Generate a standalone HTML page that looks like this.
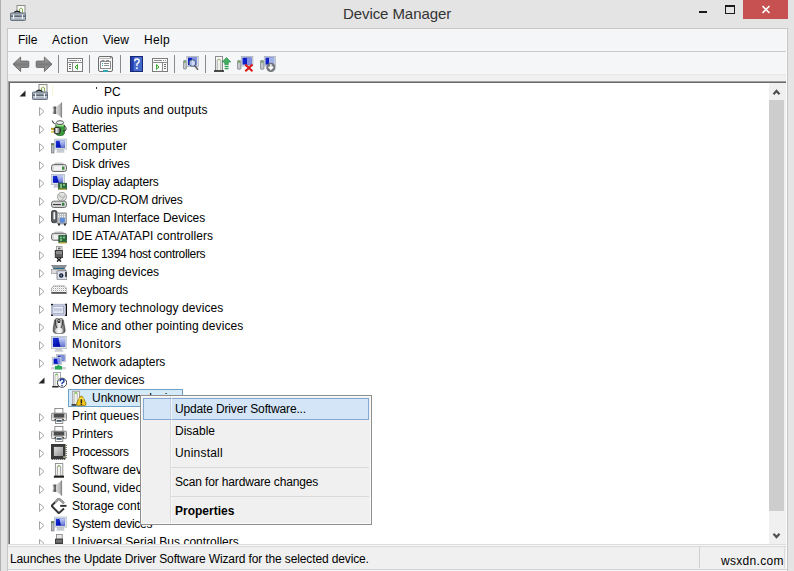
<!DOCTYPE html><html><head><meta charset="utf-8"><style>
html,body{margin:0;padding:0}
body{width:794px;height:571px;position:relative;overflow:hidden;background:#e4e4e4;font-family:"Liberation Sans",sans-serif;font-size:12px;color:#000}
.a{position:absolute}
.t{position:absolute;white-space:nowrap;line-height:14px;height:14px}
.arr{position:absolute;width:0;height:0}
</style></head><body>
<div class="a" style="left:0;top:0;width:1px;height:571px;background:#b0b0b0"></div>
<svg class="a" style="left:10px;top:5px" width="16" height="16" viewBox="0 0 16 16">
<rect x="7" y="0.5" width="8" height="8" fill="#fafaf6" stroke="#8c8c88" stroke-width="1"/>
<path d="M9.5 8 L9.5 4 Q11 2 12.5 4 L12.5 8" fill="#eef4e4" stroke="#90b060" stroke-width="1"/>
<path d="M4 8 Q7 4.5 10.5 8" fill="none" stroke="#202428" stroke-width="1.6"/>
<rect x="0.5" y="8" width="15" height="7.5" rx="0.8" fill="#a4aeba" stroke="#6a7480" stroke-width="1"/>
<rect x="1" y="10.5" width="14" height="1.5" fill="#5e6874"/>
<rect x="1" y="12.2" width="14" height="1" fill="#c8d0da"/>
<rect x="3" y="9.5" width="1.2" height="4.5" fill="#f0f4f8"/>
<rect x="11.8" y="9.5" width="1.2" height="4.5" fill="#f0f4f8"/>
</svg>
<div class="t" style="left:343px;top:5px;font-size:15px;line-height:17px;height:17px;color:#333;letter-spacing:-0.08px">Device Manager</div>
<div class="a" style="left:699px;top:11px;width:8px;height:2px;background:#1a1a1a"></div>
<div class="a" style="left:725px;top:5px;width:8px;height:6px;border:1px solid #1a1a1a;border-top-width:2px"></div>
<div class="a" style="left:743px;top:0;width:45px;height:19px;background:#c75050"></div>
<svg class="a" style="left:761px;top:5px" width="10" height="9" viewBox="0 0 10 9"><path d="M1.5 1 L8.5 8 M8.5 1 L1.5 8" stroke="#fff" stroke-width="1.6"/></svg>
<div class="a" style="left:7px;top:28px;width:781px;height:543px;background:#f5f6f7;border:1px solid #c6c6c6;border-bottom:none;box-sizing:border-box"></div>
<div class="a" style="left:786px;top:29px;width:1px;height:541px;background:#fbfbfb"></div>
<div class="t" style="left:18px;top:33px;letter-spacing:0px">File</div>
<div class="t" style="left:52px;top:33px;letter-spacing:0.5px">Action</div>
<div class="t" style="left:103px;top:33px;letter-spacing:0px">View</div>
<div class="t" style="left:144px;top:33px;letter-spacing:0.3px">Help</div>
<div class="a" style="left:8px;top:51px;width:778px;height:1px;background:#cacaca"></div>
<div class="a" style="left:8px;top:74px;width:778px;height:7px;background:#f0f0f0"></div>
<div class="a" style="left:8px;top:74px;width:778px;height:1px;background:#e8e8e8"></div>
<div class="a" style="left:58px;top:55px;width:1px;height:18px;background:#8a8a8a"></div>
<div class="a" style="left:89px;top:55px;width:1px;height:18px;background:#8a8a8a"></div>
<div class="a" style="left:120px;top:55px;width:1px;height:18px;background:#8a8a8a"></div>
<div class="a" style="left:174px;top:55px;width:1px;height:18px;background:#8a8a8a"></div>
<div class="a" style="left:205px;top:55px;width:1px;height:18px;background:#8a8a8a"></div>

<svg class="a" style="left:12px;top:56px" width="18" height="17" viewBox="0 0 18 17"><defs><linearGradient id="gar" x1="0" y1="0" x2="0" y2="1"><stop offset="0" stop-color="#b4b4b4"/><stop offset="0.5" stop-color="#7a7a7a"/><stop offset="1" stop-color="#a8a8a8"/></linearGradient></defs><path d="M1 8.2 L8.6 1 L8.6 5.1 L16 5.1 Q16.8 5.1 16.8 5.9 L16.8 10.6 Q16.8 11.4 16 11.4 L8.6 11.4 L8.6 15.5 Z" fill="url(#gar)" stroke="#666" stroke-width="0.9" stroke-linejoin="round"/></svg>
<svg class="a" style="left:35px;top:56px" width="18" height="17" viewBox="0 0 18 17"><path transform="translate(18,0) scale(-1,1)" d="M1 8.2 L8.6 1 L8.6 5.1 L16 5.1 Q16.8 5.1 16.8 5.9 L16.8 10.6 Q16.8 11.4 16 11.4 L8.6 11.4 L8.6 15.5 Z" fill="url(#gar)" stroke="#666" stroke-width="0.9" stroke-linejoin="round"/></svg>
<svg class="a" style="left:67px;top:58px" width="17" height="15" viewBox="0 0 17 15"><rect x="0.5" y="0.5" width="15" height="13" fill="#fbfbfb" stroke="#7c7c7c"/><path d="M2 2.5 h8" stroke="#8c8c8c"/><rect x="11" y="2" width="1" height="1" fill="#8c8c8c"/><rect x="13" y="2" width="1" height="1" fill="#8c8c8c"/><path d="M0.5 4.5 h15" stroke="#8c8c8c"/><path d="M5.5 4.5 v9" stroke="#8c8c8c"/><path d="M2 6.5 h2 M2 8.5 h2 M2 10.5 h2" stroke="#6c6c6c"/><path d="M10.5 6.5 L8 9 L10.5 11.5 Z" fill="#d8f0c8" stroke="#40a838" stroke-width="1"/></svg>
<svg class="a" style="left:98px;top:56px" width="16" height="17" viewBox="0 0 16 17"><rect x="0.5" y="0.5" width="14" height="15" rx="1.5" fill="#f8f8f8" stroke="#6e6e6e"/><path d="M1.5 2.5 h11" stroke="#b8b8b8"/><rect x="12" y="1" width="1.5" height="1.5" fill="#909090"/><rect x="2.5" y="5.5" width="10" height="7" fill="#ffffff" stroke="#8c8c8c"/><path d="M3.5 4.5 h3 M8 4.5 h3" stroke="#8c8c8c"/><rect x="4" y="7" width="1" height="1" fill="#30a8b8"/><rect x="4" y="9" width="1" height="1" fill="#30a8b8"/><path d="M6 7.5 h5 M6 9.5 h5" stroke="#8c8c8c"/><rect x="5" y="14" width="5" height="2" fill="#30a8b8"/></svg>
<svg class="a" style="left:130px;top:56px" width="13" height="16" viewBox="0 0 13 16"><defs><linearGradient id="ghl" x1="0" y1="0" x2="1" y2="0"><stop offset="0" stop-color="#2038a8"/><stop offset="0.25" stop-color="#2a48b8"/><stop offset="0.3" stop-color="#4c70d0"/><stop offset="1" stop-color="#4068c8"/></linearGradient></defs><rect x="0.5" y="0.5" width="12" height="15" fill="url(#ghl)" stroke="#1a2878"/><path d="M4.6 5.2 Q4.6 3 6.9 3 Q9.2 3 9.2 5.1 Q9.2 6.6 7.6 7.4 Q6.9 7.8 6.9 9 L6.9 10" fill="none" stroke="#ffffff" stroke-width="1.4"/><rect x="6.1" y="11.4" width="1.6" height="1.6" fill="#ffffff"/></svg>
<svg class="a" style="left:152px;top:58px" width="17" height="15" viewBox="0 0 17 15"><rect x="0.5" y="0.5" width="15" height="13" fill="#fbfbfb" stroke="#7c7c7c"/><path d="M2 2.5 h8" stroke="#8c8c8c"/><rect x="11" y="2" width="1" height="1" fill="#8c8c8c"/><rect x="13" y="2" width="1" height="1" fill="#8c8c8c"/><path d="M0.5 4.5 h15" stroke="#8c8c8c"/><path d="M10.5 4.5 v9" stroke="#8c8c8c"/><path d="M12 6.5 h2 M12 8.5 h2 M12 10.5 h2" stroke="#6c6c6c"/><path d="M4.5 6.5 L7 9 L4.5 11.5 Z" fill="#d8f0c8" stroke="#40a838" stroke-width="1"/></svg>
<svg class="a" style="left:183px;top:56px" width="17" height="16" viewBox="0 0 17 16"><rect x="0.4" y="4.6" width="3" height="8.4" rx="0.8" fill="#c4c8cc" stroke="#7c8084" stroke-width="0.8"/><rect x="0.9" y="5.3" width="2" height="1.2" fill="#50a030"/><rect x="3.8" y="0.4" width="11.5" height="10" fill="#dfe4ea" stroke="#a8b0b8" stroke-width="0.8"/><rect x="5" y="1.6" width="9" height="7.6" fill="#1020c8"/><rect x="9" y="1.6" width="5" height="7.6" fill="#8090e0"/><path d="M11.5 9.5 L15 13.8" stroke="#606468" stroke-width="1.6"/><circle cx="9.5" cy="7" r="3.3" fill="#e8f0fa" fill-opacity="0.75" stroke="#405878" stroke-width="1"/></svg>
<svg class="a" style="left:214px;top:56px" width="17" height="16" viewBox="0 0 17 16"><rect x="1.5" y="0.5" width="7" height="14" fill="#f8f8f8" stroke="#8c8c8c"/><path d="M3.2 14.5 L3.2 4 Q5 2 6.8 4 L6.8 14.5" fill="#eef2ea" stroke="#9c9c9c" stroke-width="0.8"/><path d="M3.5 4 Q5 2.3 6.5 4" fill="none" stroke="#b0c070" stroke-width="1"/><rect x="0" y="14.3" width="10" height="1.5" fill="#202020"/><path d="M12.5 1.5 L16.8 6 L14.3 6 L14.3 8.5 L10.7 8.5 L10.7 6 L8.2 6 Z" fill="#40b060" stroke="#208040" stroke-width="0.6"/><path d="M10.7 10.3 h3.8 M10.7 12.5 h3.8" stroke="#30a050" stroke-width="1.3"/></svg>
<svg class="a" style="left:237px;top:56px" width="17" height="16" viewBox="0 0 17 16"><rect x="0.4" y="4.6" width="3.5" height="8.6" rx="0.8" fill="#c4c8cc" stroke="#7c8084" stroke-width="0.8"/><rect x="0.9" y="5.3" width="2.4" height="1.2" fill="#50a030"/><rect x="4.3" y="0.4" width="11.5" height="9.5" fill="#dfe4ea" stroke="#a8b0b8" stroke-width="0.8"/><rect x="5.5" y="1.6" width="9" height="7" fill="#1020c8"/><rect x="10" y="1.6" width="4.5" height="7" fill="#8090e0"/><path d="M8.3 8.6 L15.5 15.2 M15.5 8.6 L8.3 15.2" stroke="#d81818" stroke-width="2"/></svg>
<svg class="a" style="left:260px;top:56px" width="17" height="16" viewBox="0 0 17 16"><rect x="0.4" y="4.6" width="3.5" height="8.6" rx="0.8" fill="#c4c8cc" stroke="#7c8084" stroke-width="0.8"/><rect x="0.9" y="5.3" width="2.4" height="1.2" fill="#50a030"/><rect x="4.3" y="0.4" width="11" height="9.5" fill="#dfe4ea" stroke="#a8b0b8" stroke-width="0.8"/><rect x="5.5" y="1.6" width="8.6" height="7" fill="#1020c8"/><rect x="9" y="1.6" width="5" height="7" fill="#a0b0e8"/><circle cx="10.9" cy="11.4" r="4.1" fill="#7c8084" stroke="#606468" stroke-width="0.8"/><path d="M10.9 8.3 v4.5 M8.7 10.7 L10.9 13.2 L13.1 10.7" stroke="#fff" stroke-width="1.5" fill="none"/></svg>

<div class="a" style="left:8px;top:81px;width:778px;height:464px;background:#a0a0a0"></div>
<div class="a" style="left:9px;top:82px;width:777px;height:463px;background:#6a6a6a"></div>
<div class="a" style="left:10px;top:83px;width:776px;height:461px;background:#fff"></div>
<div class="a" style="left:769px;top:83px;width:17px;height:461px;background:#f0f0f0"></div>
<div class="a" style="left:769px;top:100px;width:15px;height:411px;background:#cdcdcd"></div>
<svg class="a" style="left:772px;top:88px" width="10" height="8" viewBox="0 0 10 8"><path d="M1.5 6.3 L4.5 3 L7.5 6.3" fill="none" stroke="#505050" stroke-width="2.2"/></svg>
<svg class="a" style="left:772px;top:532px" width="10" height="8" viewBox="0 0 10 8"><path d="M1.5 1.7 L4.5 5 L7.5 1.7" fill="none" stroke="#505050" stroke-width="2.2"/></svg>
<div class="a" style="left:0;top:83px;width:769px;height:461px;overflow:hidden"><div class="a" style="left:0;top:-83px;width:769px;height:571px">
<svg class="a" style="left:19px;top:90px" width="7" height="7" viewBox="0 0 7 7"><path d="M6.5 0.5 L6.5 6.5 L0.5 6.5 Z" fill="#262626"/></svg>
<svg class="a" style="left:32px;top:84px" width="16" height="16" viewBox="0 0 16 16">
<rect x="7" y="0.5" width="8" height="8" fill="#fafaf6" stroke="#8c8c88" stroke-width="1"/>
<path d="M9.5 8 L9.5 4 Q11 2 12.5 4 L12.5 8" fill="#eef4e4" stroke="#90b060" stroke-width="1"/>
<path d="M4 8 Q7 4.5 10.5 8" fill="none" stroke="#202428" stroke-width="1.6"/>
<rect x="0.5" y="8" width="15" height="7.5" rx="0.8" fill="#a4aeba" stroke="#6a7480" stroke-width="1"/>
<rect x="1" y="10.5" width="14" height="1.5" fill="#5e6874"/>
<rect x="1" y="12.2" width="14" height="1" fill="#c8d0da"/>
<rect x="3" y="9.5" width="1.2" height="4.5" fill="#f0f4f8"/>
<rect x="11.8" y="9.5" width="1.2" height="4.5" fill="#f0f4f8"/>
</svg>
<div class="a" style="left:96px;top:87px;width:1px;height:2px;background:#333"></div>
<div class="a" style="left:52px;top:85px;width:1px;height:11px;background:#f6f6d8"></div>
<div class="t" style="left:104px;top:85px">PC</div>
<svg class="a" style="left:39px;top:107px" width="6" height="10" viewBox="0 0 6 10"><path d="M0.5 0.5 L5 4.5 L0.5 8.5 Z" fill="#fff" stroke="#a6a6a6" stroke-width="1"/></svg>
<svg class="a" style="left:51px;top:102px" width="16" height="16" viewBox="0 0 16 16">
<defs><linearGradient id="gsp" x1="0" x2="1"><stop offset="0" stop-color="#d8d8d8"/><stop offset="0.6" stop-color="#b8b8b8"/><stop offset="1" stop-color="#8a8a8a"/></linearGradient>
<linearGradient id="gsb" x1="0" y1="0" x2="0" y2="1"><stop offset="0" stop-color="#888888"/><stop offset="0.5" stop-color="#d0d0d0"/><stop offset="1" stop-color="#808080"/></linearGradient></defs>
<rect x="1.8" y="4.6" width="3.9" height="7.2" fill="url(#gsb)"/>
<rect x="3.4" y="4.6" width="1.3" height="7.2" fill="#3c3c3c"/>
<path d="M5.6 4.6 L11 0.2 L11 15.8 L5.6 11.8 Z" fill="url(#gsp)"/>
<rect x="10.2" y="0.5" width="0.9" height="15.2" fill="#888888"/>
</svg>
<div class="t" style="left:72px;top:103px;letter-spacing:0.148px">Audio inputs and outputs</div>
<svg class="a" style="left:39px;top:125px" width="6" height="10" viewBox="0 0 6 10"><path d="M0.5 0.5 L5 4.5 L0.5 8.5 Z" fill="#fff" stroke="#a6a6a6" stroke-width="1"/></svg>
<svg class="a" style="left:51px;top:120px" width="16" height="16" viewBox="0 0 16 16">
<defs><linearGradient id="gplug" x1="0" x2="1"><stop offset="0" stop-color="#3c3c3c"/><stop offset="0.35" stop-color="#e8e8e8"/><stop offset="1" stop-color="#5c5c5c"/></linearGradient></defs>
<path d="M1.2 0.6 Q2 3.5 5 4.3" fill="none" stroke="#303030" stroke-width="1.1"/>
<path d="M4.8 5 L4.8 13 Q4.8 15.5 9 15.5 Q13.4 15.5 13.4 13 L13.4 5 Z" fill="#3a9a3c" stroke="#206a24" stroke-width="0.8"/>
<path d="M5.5 5.6 h7.2" stroke="#a0e890" stroke-width="1.6"/>
<ellipse cx="9" cy="2.6" rx="3.6" ry="1.9" fill="#f4f4f4" stroke="#404040" stroke-width="0.9"/>
<path d="M13 5.5 Q16 7 15 10 Q14 11 12 11" fill="none" stroke="#282828" stroke-width="1"/>
<rect x="0" y="7.8" width="3.6" height="2" fill="#b89820"/>
<rect x="0" y="10.8" width="3.6" height="2" fill="#e0cc60"/>
<rect x="3.3" y="7.4" width="5.9" height="6.3" rx="1.5" fill="url(#gplug)" stroke="#1c1c1c" stroke-width="0.9"/>
</svg>
<div class="t" style="left:72px;top:121px;letter-spacing:-0.188px">Batteries</div>
<svg class="a" style="left:39px;top:143px" width="6" height="10" viewBox="0 0 6 10"><path d="M0.5 0.5 L5 4.5 L0.5 8.5 Z" fill="#fff" stroke="#a6a6a6" stroke-width="1"/></svg>
<svg class="a" style="left:51px;top:138px" width="16" height="16" viewBox="0 0 16 16">
<rect x="0.4" y="5.5" width="2.6" height="9.4" fill="#b8bcc0" stroke="#7a7e82" stroke-width="0.8"/>
<rect x="0.8" y="5.8" width="1.8" height="1.3" fill="#4a8a20"/>
<path d="M6 11 L13 11 L13.5 14.8 L5.5 14.8 Z" fill="#c8ccd2"/>
<rect x="3.6" y="1.1" width="12.3" height="10" fill="#dfe4ea" stroke="#b4bcc4" stroke-width="0.8"/>
<defs><linearGradient id="gcs" x1="0" y1="0" x2="1" y2="1"><stop offset="0" stop-color="#2038d8"/><stop offset="0.6" stop-color="#0010b8"/><stop offset="1" stop-color="#000880"/></linearGradient>
<linearGradient id="gcs2" x1="0" y1="0" x2="0" y2="1"><stop offset="0" stop-color="#c0ccf8"/><stop offset="1" stop-color="#6070d0"/></linearGradient></defs>
<rect x="4.8" y="2.7" width="9.1" height="7" fill="url(#gcs)"/>
<path d="M8.5 2.7 L13.9 2.7 L13.9 9.7 L10 9.7 Q9 6 8.5 2.7 Z" fill="url(#gcs2)"/>
</svg>
<div class="t" style="left:72px;top:139px;letter-spacing:0.329px">Computer</div>
<svg class="a" style="left:39px;top:161px" width="6" height="10" viewBox="0 0 6 10"><path d="M0.5 0.5 L5 4.5 L0.5 8.5 Z" fill="#fff" stroke="#a6a6a6" stroke-width="1"/></svg>
<svg class="a" style="left:51px;top:156px" width="16" height="16" viewBox="0 0 16 16">
<rect x="4" y="6.9" width="8" height="1.8" rx="0.6" fill="#d8d8d8" stroke="#a0a0a0" stroke-width="0.5"/>
<rect x="0.5" y="8.5" width="15" height="7" rx="2.2" fill="#d8d8d8" stroke="#6c6c6c" stroke-width="1"/>
<rect x="2.9" y="10.2" width="8.1" height="4.2" fill="#f2f2f2"/>
<rect x="11" y="10.6" width="2.4" height="3.1" fill="#3a9040"/>
</svg>
<div class="t" style="left:72px;top:157px;letter-spacing:-0.100px">Disk drives</div>
<svg class="a" style="left:39px;top:179px" width="6" height="10" viewBox="0 0 6 10"><path d="M0.5 0.5 L5 4.5 L0.5 8.5 Z" fill="#fff" stroke="#a6a6a6" stroke-width="1"/></svg>
<svg class="a" style="left:51px;top:174px" width="16" height="16" viewBox="0 0 16 16">
<path d="M3 10.6 L8 10.6 L8.5 13.7 L2.5 13.7 Z" fill="#c8ccd2"/>
<rect x="0.4" y="0.4" width="13" height="10.2" fill="#dfe4ea" stroke="#b4bcc4" stroke-width="0.8"/>
<defs><linearGradient id="gds" x1="0" y1="0" x2="1" y2="1"><stop offset="0" stop-color="#2038d8"/><stop offset="0.6" stop-color="#0010b8"/><stop offset="1" stop-color="#000880"/></linearGradient>
<linearGradient id="gds2" x1="0" y1="0" x2="0" y2="1"><stop offset="0" stop-color="#c0ccf8"/><stop offset="1" stop-color="#6070d0"/></linearGradient></defs>
<rect x="1.9" y="1.8" width="10.1" height="7" fill="url(#gds)"/>
<path d="M6 1.8 L12 1.8 L12 8.8 L8 8.8 Q6.5 5 6 1.8 Z" fill="url(#gds2)"/>
<rect x="7.5" y="9.2" width="8.4" height="6" fill="#2a6a3c" stroke="#184828" stroke-width="0.6"/>
<circle cx="10" cy="11" r="0.9" fill="#a8e0a0"/><circle cx="13" cy="11" r="0.9" fill="#a8e0a0"/><circle cx="10" cy="13" r="0.9" fill="#a8e0a0"/>
<rect x="8" y="14.6" width="7" height="1.2" fill="#c8b040"/>
</svg>
<div class="t" style="left:72px;top:175px;letter-spacing:-0.173px">Display adapters</div>
<svg class="a" style="left:39px;top:197px" width="6" height="10" viewBox="0 0 6 10"><path d="M0.5 0.5 L5 4.5 L0.5 8.5 Z" fill="#fff" stroke="#a6a6a6" stroke-width="1"/></svg>
<svg class="a" style="left:51px;top:192px" width="16" height="16" viewBox="0 0 16 16">
<circle cx="11" cy="4.8" r="4.5" fill="#e4e4e4" stroke="#8c8c8c" stroke-width="0.8"/>
<path d="M8 2.5 Q9 6 11 4.8 M10 8.5 Q13 7 14 3" fill="none" stroke="#a0b0a0" stroke-width="1"/>
<circle cx="11" cy="4.8" r="1" fill="#fff" stroke="#909090" stroke-width="0.5"/>
<rect x="0.5" y="9.2" width="15" height="6.3" rx="2.2" fill="#d4d4d4" stroke="#6c6c6c" stroke-width="1"/>
<rect x="1.9" y="12" width="8.1" height="1.1" fill="#404040"/>
<rect x="11" y="10.8" width="2.4" height="3" fill="#3a8040"/>
</svg>
<div class="t" style="left:72px;top:193px;letter-spacing:-0.163px">DVD/CD-ROM drives</div>
<svg class="a" style="left:39px;top:215px" width="6" height="10" viewBox="0 0 6 10"><path d="M0.5 0.5 L5 4.5 L0.5 8.5 Z" fill="#fff" stroke="#a6a6a6" stroke-width="1"/></svg>
<svg class="a" style="left:51px;top:210px" width="16" height="16" viewBox="0 0 16 16">
<rect x="0.5" y="0.5" width="5.5" height="12.2" rx="1.8" fill="#585c60" stroke="#303438" stroke-width="0.8"/>
<rect x="2.4" y="2" width="1.8" height="7.5" rx="0.8" fill="#f4f4f4"/>
<rect x="6" y="2.9" width="10" height="11" rx="1" fill="#b8bcc0" stroke="#707478" stroke-width="0.7"/>
<path d="M7 4.7 h8 M7 6.7 h8" stroke="#ffffff" stroke-width="1" stroke-dasharray="1 1"/>
<rect x="8.9" y="7.8" width="4.9" height="4.9" fill="#5a8ad8"/>
<rect x="7" y="13.5" width="2" height="2" fill="#303030"/><rect x="13" y="13.5" width="2" height="2" fill="#303030"/>
</svg>
<div class="t" style="left:72px;top:211px;letter-spacing:-0.068px">Human Interface Devices</div>
<svg class="a" style="left:39px;top:233px" width="6" height="10" viewBox="0 0 6 10"><path d="M0.5 0.5 L5 4.5 L0.5 8.5 Z" fill="#fff" stroke="#a6a6a6" stroke-width="1"/></svg>
<svg class="a" style="left:51px;top:228px" width="16" height="16" viewBox="0 0 16 16">
<rect x="4" y="3.9" width="8" height="1.6" rx="0.6" fill="#d8d8d8" stroke="#a0a0a0" stroke-width="0.5"/>
<rect x="0.5" y="5.3" width="15" height="7" rx="2.2" fill="#d8d8d8" stroke="#6c6c6c" stroke-width="1"/>
<rect x="2.9" y="7" width="8" height="4" fill="#f2f2f2"/>
<rect x="7.8" y="7.4" width="7.7" height="7.4" fill="#2a6a3c" stroke="#184828" stroke-width="0.6"/>
<circle cx="10" cy="9.5" r="0.9" fill="#a8e0a0"/><circle cx="13" cy="9.5" r="0.9" fill="#a8e0a0"/><circle cx="10" cy="12" r="0.9" fill="#a8e0a0"/>
<rect x="8.5" y="14.2" width="6.5" height="1.3" fill="#c8b040"/>
</svg>
<div class="t" style="left:72px;top:229px;letter-spacing:0.075px">IDE ATA/ATAPI controllers</div>
<svg class="a" style="left:39px;top:251px" width="6" height="10" viewBox="0 0 6 10"><path d="M0.5 0.5 L5 4.5 L0.5 8.5 Z" fill="#fff" stroke="#a6a6a6" stroke-width="1"/></svg>
<svg class="a" style="left:51px;top:246px" width="16" height="16" viewBox="0 0 16 16">
<rect x="5.4" y="0.4" width="5.6" height="3.8" fill="#f4f4f4" stroke="#8c8c8c" stroke-width="0.8"/>
<rect x="7" y="1.5" width="2.5" height="1.8" fill="#606060"/>
<rect x="3.8" y="3.9" width="8.2" height="8.1" rx="0.6" fill="#3c3c3c"/>
<rect x="5" y="5" width="6" height="3.5" fill="#8c8c8c"/>
<rect x="4.5" y="9.5" width="7" height="1" fill="#808080"/>
<path d="M6 12 L10 15.6 M10 12 L6 15.6" stroke="#202020" stroke-width="1.4"/>
</svg>
<div class="t" style="left:72px;top:247px;letter-spacing:-0.340px">IEEE 1394 host controllers</div>
<svg class="a" style="left:39px;top:269px" width="6" height="10" viewBox="0 0 6 10"><path d="M0.5 0.5 L5 4.5 L0.5 8.5 Z" fill="#fff" stroke="#a6a6a6" stroke-width="1"/></svg>
<svg class="a" style="left:51px;top:264px" width="16" height="16" viewBox="0 0 16 16">
<path d="M0 0.9 L16 0.9 L13.5 5.3 L2.5 5.3 Z" fill="#8c9094"/>
<rect x="2.5" y="3.9" width="11" height="1.4" fill="#2a6a84"/>
<rect x="0.3" y="5.3" width="14.2" height="4.2" fill="#dcdcdc" stroke="#8c8c8c" stroke-width="0.6"/>
<rect x="6" y="6.7" width="10" height="9.1" rx="1" fill="#dde0e8" stroke="#6c7078" stroke-width="0.8"/>
<rect x="14.2" y="8" width="1.6" height="5" fill="#303030"/>
<circle cx="10.2" cy="11.5" r="2.2" fill="#1a2238"/>
<circle cx="10.2" cy="11.5" r="0.9" fill="#7090b0"/>
</svg>
<div class="t" style="left:72px;top:265px;letter-spacing:0.029px">Imaging devices</div>
<svg class="a" style="left:39px;top:287px" width="6" height="10" viewBox="0 0 6 10"><path d="M0.5 0.5 L5 4.5 L0.5 8.5 Z" fill="#fff" stroke="#a6a6a6" stroke-width="1"/></svg>
<svg class="a" style="left:51px;top:282px" width="16" height="16" viewBox="0 0 16 16">
<defs><pattern id="kbp" width="2" height="2" patternUnits="userSpaceOnUse"><rect width="2" height="2" fill="#ffffff"/><rect width="1" height="1" fill="#a0a0a0"/><rect x="1" y="1" width="1" height="1" fill="#e0e0e0"/></pattern></defs>
<path d="M2.5 3.9 L13.5 3.9 Q16 6 16 9 L16 11.4 L0 11.4 L0 9 Q0 6 2.5 3.9 Z" fill="url(#kbp)" stroke="#909090" stroke-width="0.7"/>
<rect x="0.6" y="10.2" width="14.8" height="1.4" rx="0.7" fill="#2c2c2c"/>
</svg>
<div class="t" style="left:72px;top:283px;letter-spacing:-0.150px">Keyboards</div>
<svg class="a" style="left:39px;top:305px" width="6" height="10" viewBox="0 0 6 10"><path d="M0.5 0.5 L5 4.5 L0.5 8.5 Z" fill="#fff" stroke="#a6a6a6" stroke-width="1"/></svg>
<svg class="a" style="left:51px;top:300px" width="16" height="16" viewBox="0 0 16 16">
<rect x="0.3" y="4.2" width="15.3" height="11.3" fill="#c8cce0" stroke="#9ca4c0" stroke-width="0.6"/>
<rect x="1.8" y="6.3" width="10.8" height="7" fill="#f0f2f8" stroke="#9ca4c0" stroke-width="0.8"/>
<rect x="2.8" y="8" width="8.8" height="3.5" fill="#c8cce0"/>
<rect x="0" y="3.9" width="2" height="1.3" fill="#101010"/><rect x="0" y="14.5" width="2" height="1.3" fill="#101010"/>
<path d="M14.2 4.4 L15.4 4.4 L15.4 15.3 L14.2 15.3" fill="none" stroke="#101010" stroke-width="1.2"/>
</svg>
<div class="t" style="left:72px;top:301px;letter-spacing:0.108px">Memory technology devices</div>
<svg class="a" style="left:39px;top:323px" width="6" height="10" viewBox="0 0 6 10"><path d="M0.5 0.5 L5 4.5 L0.5 8.5 Z" fill="#fff" stroke="#a6a6a6" stroke-width="1"/></svg>
<svg class="a" style="left:51px;top:318px" width="16" height="16" viewBox="0 0 16 16">
<defs><linearGradient id="gms" x1="0" x2="1"><stop offset="0" stop-color="#505050"/><stop offset="0.2" stop-color="#909090"/><stop offset="0.5" stop-color="#f8f8f8"/><stop offset="0.8" stop-color="#909090"/><stop offset="1" stop-color="#404040"/></linearGradient></defs>
<path d="M5 0.5 Q8 -0.2 11 0.5 Q13 1.5 13 6 Q14.2 10 14.1 13 Q14 15.8 8 15.8 Q2.2 15.8 2.2 13 Q2 10 3 6 Q3 1.5 5 0.5 Z" fill="url(#gms)" stroke="#4c4c4c" stroke-width="0.7"/>
<path d="M4.5 2 Q4 8 6 10 M11.5 2 Q12 8 10 10" fill="none" stroke="#3c3c3c" stroke-width="1"/>
<rect x="6.5" y="1" width="2.8" height="4" rx="1.2" fill="#202020"/>
<rect x="7.3" y="1.8" width="1.2" height="1.5" fill="#e0e0e0"/>
<ellipse cx="8" cy="12.5" rx="3.8" ry="2.6" fill="#ffffff" opacity="0.6"/>
</svg>
<div class="t" style="left:72px;top:319px;letter-spacing:0.083px">Mice and other pointing devices</div>
<svg class="a" style="left:39px;top:341px" width="6" height="10" viewBox="0 0 6 10"><path d="M0.5 0.5 L5 4.5 L0.5 8.5 Z" fill="#fff" stroke="#a6a6a6" stroke-width="1"/></svg>
<svg class="a" style="left:51px;top:336px" width="16" height="16" viewBox="0 0 16 16">
<path d="M5 12.7 L10.5 12.7 L12.7 15.8 L3 15.8 Z" fill="#c8ccd2"/>
<rect x="0.4" y="0.4" width="15.5" height="12.3" fill="#dfe4ea" stroke="#b4bcc4" stroke-width="0.8"/>
<defs><linearGradient id="gmon" x1="0" y1="0" x2="1" y2="1"><stop offset="0" stop-color="#2038d8"/><stop offset="0.6" stop-color="#0010b0"/><stop offset="1" stop-color="#000880"/></linearGradient>
<linearGradient id="gmon2" x1="0" y1="0" x2="0" y2="1"><stop offset="0" stop-color="#c8d4f8"/><stop offset="1" stop-color="#6070d0"/></linearGradient></defs>
<rect x="1.9" y="1.8" width="12.2" height="9.1" fill="url(#gmon)"/>
<path d="M7.5 1.8 L14.1 1.8 L14.1 10.9 L9.5 10.9 Q8 6 7.5 1.8 Z" fill="url(#gmon2)"/>
</svg>
<div class="t" style="left:72px;top:337px;letter-spacing:0.414px">Monitors</div>
<svg class="a" style="left:39px;top:359px" width="6" height="10" viewBox="0 0 6 10"><path d="M0.5 0.5 L5 4.5 L0.5 8.5 Z" fill="#fff" stroke="#a6a6a6" stroke-width="1"/></svg>
<svg class="a" style="left:51px;top:354px" width="16" height="16" viewBox="0 0 16 16">
<rect x="5.4" y="0.3" width="9.1" height="7.5" fill="#dfe4ea" stroke="#a8b0b8" stroke-width="0.6"/>
<rect x="6.6" y="1.5" width="6.8" height="5.2" fill="#1828b8"/>
<rect x="9.5" y="1.5" width="3.9" height="5.2" fill="#8090e0"/>
<rect x="1.2" y="3.2" width="9.1" height="7.7" fill="#dfe4ea" stroke="#a8b0b8" stroke-width="0.6"/>
<rect x="2.6" y="4.6" width="6.6" height="5.3" fill="#0818c8"/>
<path d="M6 4.6 L9.2 4.6 L9.2 9.9 L7 9.9 Q6.2 7 6 4.6 Z" fill="#8090e8"/>
<rect x="0" y="13" width="14.8" height="2.5" fill="#d0d4d8"/>
<rect x="4" y="12" width="7" height="3.5" fill="#28a858"/>
<rect x="6.5" y="10.9" width="2" height="1.5" fill="#28a858"/>
</svg>
<div class="t" style="left:72px;top:355px;letter-spacing:-0.047px">Network adapters</div>
<svg class="a" style="left:38px;top:377px" width="7" height="7" viewBox="0 0 7 7"><path d="M6.5 0.5 L6.5 6.5 L0.5 6.5 Z" fill="#262626"/></svg>
<svg class="a" style="left:51px;top:372px" width="16" height="16" viewBox="0 0 16 16">
<rect x="2.5" y="0.5" width="7" height="13.9" fill="#ffffff" stroke="#a4a4b4" stroke-width="1"/>
<path d="M4 14 L4 3 Q5.5 1.3 7 3 L7 14" fill="#f0f4ec" stroke="#b0b0b0" stroke-width="0.8"/>
<path d="M4.2 3 Q5.5 1.3 6.8 3" fill="none" stroke="#80c050" stroke-width="1.2"/>
<rect x="1.2" y="14" width="6.3" height="1.5" fill="#282828"/>
<circle cx="11.05" cy="10.75" r="4.6" fill="#ffffff" stroke="#404850" stroke-width="1"/>
<path d="M9.2 9.2 Q9.2 7.3 11.1 7.3 Q13 7.3 13 8.9 Q13 10.1 11.6 10.6 Q11.1 10.8 11.1 11.6 L11.1 12" fill="none" stroke="#2040a0" stroke-width="1.5"/>
<rect x="10.35" y="12.8" width="1.5" height="1.4" fill="#2040a0"/>
</svg>
<div class="t" style="left:72px;top:373px;letter-spacing:-0.133px">Other devices</div>
<div class="a" style="left:68px;top:389px;width:115px;height:18px;background:#d5eaf8;border:1px solid #6ea0c8;box-sizing:border-box"></div>
<svg class="a" style="left:71px;top:390px" width="16" height="16" viewBox="0 0 16 16">
<rect x="1.7" y="1.25" width="6.8" height="13.5" fill="#f8f8f8" stroke="#a0a0a0" stroke-width="1"/>
<path d="M3.2 14.5 L3.2 3.5 Q4.8 1.8 6.4 3.5 L6.4 14.5" fill="#eef2ea" stroke="#b0b0b0" stroke-width="0.8"/>
<path d="M3.4 3.5 Q4.8 1.8 6.2 3.5" fill="none" stroke="#80c050" stroke-width="1.2"/>
<rect x="0.5" y="14.2" width="5" height="1.5" fill="#282828"/>
<path d="M10.3 6.2 Q11.5 6.2 12.3 7.8 L14.9 13.2 Q15.6 15.6 13.2 15.6 L7.4 15.6 Q5 15.6 5.7 13.2 L8.3 7.8 Q9.1 6.2 10.3 6.2 Z" fill="#f4c818" stroke="#8c6c08" stroke-width="0.8"/>
<path d="M7.5 9 Q10.3 7.5 13 9" fill="none" stroke="#fff080" stroke-width="0.8"/>
<rect x="9.6" y="9.3" width="1.5" height="3.8" fill="#202020"/>
<rect x="9.6" y="13.6" width="1.5" height="1.3" fill="#202020"/>
</svg>
<div class="t" style="left:92px;top:391px">Unknown device</div>
<svg class="a" style="left:39px;top:413px" width="6" height="10" viewBox="0 0 6 10"><path d="M0.5 0.5 L5 4.5 L0.5 8.5 Z" fill="#fff" stroke="#a6a6a6" stroke-width="1"/></svg>
<svg class="a" style="left:51px;top:408px" width="16" height="16" viewBox="0 0 16 16">
<rect x="3.9" y="0.4" width="8" height="5" fill="#ffffff" stroke="#787878" stroke-width="0.8"/>
<rect x="0.4" y="5.2" width="15.2" height="7.4" rx="1" fill="#d0d0d0" stroke="#6c6c6c" stroke-width="0.8"/>
<rect x="2.8" y="5.8" width="10.4" height="3.8" fill="#4c4c4c"/>
<rect x="0.8" y="10.5" width="14.4" height="1" fill="#ffffff"/>
<rect x="4.5" y="10.8" width="7.3" height="4.7" fill="#ffffff" stroke="#787878" stroke-width="0.8"/>
<rect x="5.5" y="12" width="5.2" height="1.8" fill="#485868"/>
<rect x="3.5" y="11" width="1.2" height="1.3" fill="#202020"/><rect x="11.5" y="11" width="1.2" height="1.3" fill="#202020"/>
</svg>
<div class="t" style="left:72px;top:409px;letter-spacing:-0.045px">Print queues</div>
<svg class="a" style="left:39px;top:431px" width="6" height="10" viewBox="0 0 6 10"><path d="M0.5 0.5 L5 4.5 L0.5 8.5 Z" fill="#fff" stroke="#a6a6a6" stroke-width="1"/></svg>
<svg class="a" style="left:51px;top:426px" width="16" height="16" viewBox="0 0 16 16">
<rect x="3.9" y="0.4" width="8" height="5" fill="#ffffff" stroke="#787878" stroke-width="0.8"/>
<rect x="0.4" y="5.2" width="15.2" height="7.4" rx="1" fill="#d0d0d0" stroke="#6c6c6c" stroke-width="0.8"/>
<rect x="2.8" y="5.8" width="10.4" height="3.8" fill="#4c4c4c"/>
<rect x="0.8" y="10.5" width="14.4" height="1" fill="#ffffff"/>
<rect x="4.5" y="10.8" width="7.3" height="4.7" fill="#ffffff" stroke="#787878" stroke-width="0.8"/>
<rect x="5.5" y="12" width="5.2" height="1.8" fill="#485868"/>
<rect x="3.5" y="11" width="1.2" height="1.3" fill="#202020"/><rect x="11.5" y="11" width="1.2" height="1.3" fill="#202020"/>
</svg>
<div class="t" style="left:72px;top:427px;letter-spacing:-0.043px">Printers</div>
<svg class="a" style="left:39px;top:449px" width="6" height="10" viewBox="0 0 6 10"><path d="M0.5 0.5 L5 4.5 L0.5 8.5 Z" fill="#fff" stroke="#a6a6a6" stroke-width="1"/></svg>
<svg class="a" style="left:51px;top:444px" width="16" height="16" viewBox="0 0 16 16">
<defs><linearGradient id="gcpu" x1="0" y1="0" x2="1" y2="1"><stop offset="0" stop-color="#e0e0e0"/><stop offset="1" stop-color="#909090"/></linearGradient></defs>
<rect x="0" y="0" width="14.5" height="15.3" fill="#383838"/>
<path d="M14.5 1.5 h1.5 M14.5 3.5 h1.5 M14.5 5.5 h1.5 M14.5 7.5 h1.5 M14.5 9.5 h1.5 M14.5 11.5 h1.5 M14.5 13.5 h1.5" stroke="#6c6c50" stroke-width="0.9"/>
<path d="M1.5 15.3 v0.7 M3.5 15.3 v0.7 M5.5 15.3 v0.7 M7.5 15.3 v0.7 M9.5 15.3 v0.7 M11.5 15.3 v0.7 M13.5 15.3 v0.7" stroke="#404040" stroke-width="0.9"/>
<rect x="2.9" y="2.9" width="9.1" height="9.1" fill="url(#gcpu)"/>
<rect x="12.3" y="12.3" width="1.6" height="1.6" fill="#c0b890"/>
</svg>
<div class="t" style="left:72px;top:445px;letter-spacing:-0.333px">Processors</div>
<svg class="a" style="left:39px;top:467px" width="6" height="10" viewBox="0 0 6 10"><path d="M0.5 0.5 L5 4.5 L0.5 8.5 Z" fill="#fff" stroke="#a6a6a6" stroke-width="1"/></svg>
<svg class="a" style="left:51px;top:462px" width="16" height="16" viewBox="0 0 16 16">
<rect x="4.4" y="1.5" width="7.4" height="12.2" fill="#ffffff" stroke="#8c8c8c" stroke-width="0.9"/>
<path d="M6.3 13.7 L6.3 4.5 Q8 2.8 9.7 4.5 L9.7 13.7" fill="#f0f4ec" stroke="#8c8c8c" stroke-width="0.8"/>
<path d="M6.6 4.3 Q8 3 9.4 4.3" fill="none" stroke="#80b050" stroke-width="1"/>
<rect x="2.9" y="13.7" width="10.1" height="2" fill="#1c1c1c"/>
</svg>
<div class="t" style="left:72px;top:463px;letter-spacing:0.000px">Software devices</div>
<svg class="a" style="left:39px;top:485px" width="6" height="10" viewBox="0 0 6 10"><path d="M0.5 0.5 L5 4.5 L0.5 8.5 Z" fill="#fff" stroke="#a6a6a6" stroke-width="1"/></svg>
<svg class="a" style="left:51px;top:480px" width="16" height="16" viewBox="0 0 16 16">
<defs><linearGradient id="gsp" x1="0" x2="1"><stop offset="0" stop-color="#d8d8d8"/><stop offset="0.6" stop-color="#b8b8b8"/><stop offset="1" stop-color="#8a8a8a"/></linearGradient>
<linearGradient id="gsb" x1="0" y1="0" x2="0" y2="1"><stop offset="0" stop-color="#888888"/><stop offset="0.5" stop-color="#d0d0d0"/><stop offset="1" stop-color="#808080"/></linearGradient></defs>
<rect x="1.8" y="4.6" width="3.9" height="7.2" fill="url(#gsb)"/>
<rect x="3.4" y="4.6" width="1.3" height="7.2" fill="#3c3c3c"/>
<path d="M5.6 4.6 L11 0.2 L11 15.8 L5.6 11.8 Z" fill="url(#gsp)"/>
<rect x="10.2" y="0.5" width="0.9" height="15.2" fill="#888888"/>
</svg>
<div class="t" style="left:72px;top:481px;letter-spacing:0.000px">Sound, video and game controllers</div>
<svg class="a" style="left:39px;top:503px" width="6" height="10" viewBox="0 0 6 10"><path d="M0.5 0.5 L5 4.5 L0.5 8.5 Z" fill="#fff" stroke="#a6a6a6" stroke-width="1"/></svg>
<svg class="a" style="left:51px;top:498px" width="16" height="16" viewBox="0 0 16 16">
<path d="M13 5.3 L7.8 0.6 L0.6 7.9 L7.8 15.2 L13 10.6" fill="none" stroke="#343434" stroke-width="2"/>
<path d="M13 5.3 L7.8 0.6 L4 4.4" fill="none" stroke="#9c9c9c" stroke-width="2"/>
<rect x="9.2" y="6.9" width="6.3" height="1.9" fill="#303030"/>
</svg>
<div class="t" style="left:72px;top:499px;letter-spacing:0.000px">Storage controllers</div>
<svg class="a" style="left:39px;top:521px" width="6" height="10" viewBox="0 0 6 10"><path d="M0.5 0.5 L5 4.5 L0.5 8.5 Z" fill="#fff" stroke="#a6a6a6" stroke-width="1"/></svg>
<svg class="a" style="left:51px;top:516px" width="16" height="16" viewBox="0 0 16 16">
<rect x="0.4" y="5.5" width="2.6" height="9.4" fill="#b8bcc0" stroke="#7a7e82" stroke-width="0.8"/>
<rect x="0.8" y="5.8" width="1.8" height="1.3" fill="#4a8a20"/>
<path d="M6 11 L13 11 L13.5 14.8 L5.5 14.8 Z" fill="#c8ccd2"/>
<rect x="3.6" y="1.1" width="12.3" height="10" fill="#dfe4ea" stroke="#b4bcc4" stroke-width="0.8"/>
<defs><linearGradient id="gcs" x1="0" y1="0" x2="1" y2="1"><stop offset="0" stop-color="#2038d8"/><stop offset="0.6" stop-color="#0010b8"/><stop offset="1" stop-color="#000880"/></linearGradient>
<linearGradient id="gcs2" x1="0" y1="0" x2="0" y2="1"><stop offset="0" stop-color="#c0ccf8"/><stop offset="1" stop-color="#6070d0"/></linearGradient></defs>
<rect x="4.8" y="2.7" width="9.1" height="7" fill="url(#gcs)"/>
<path d="M8.5 2.7 L13.9 2.7 L13.9 9.7 L10 9.7 Q9 6 8.5 2.7 Z" fill="url(#gcs2)"/>
</svg>
<div class="t" style="left:72px;top:517px;letter-spacing:-0.277px">System devices</div>
<svg class="a" style="left:39px;top:539px" width="6" height="10" viewBox="0 0 6 10"><path d="M0.5 0.5 L5 4.5 L0.5 8.5 Z" fill="#fff" stroke="#a6a6a6" stroke-width="1"/></svg>
<svg class="a" style="left:51px;top:534px" width="16" height="16" viewBox="0 0 16 16">
<rect x="5.4" y="0.4" width="5.8" height="4.4" fill="#e8e8e8" stroke="#808080" stroke-width="0.8"/>
<rect x="4" y="4.75" width="8" height="5.5" fill="#3c3c3c"/>
<rect x="5" y="5.7" width="6" height="3" fill="#707070"/>
</svg>
<div class="t" style="left:72px;top:535px;letter-spacing:0.000px">Universal Serial Bus controllers</div>
</div></div>
<div class="a" style="left:8px;top:544px;width:778px;height:1px;background:#dcdcdc"></div>
<div class="a" style="left:8px;top:545px;width:778px;height:1px;background:#f8f8f8"></div>
<div class="a" style="left:8px;top:546px;width:778px;height:1px;background:#d8d8d8"></div>
<div class="a" style="left:8px;top:547px;width:778px;height:22px;background:#f0f0f0"></div>
<div class="a" style="left:8px;top:569px;width:779px;height:1px;background:#d4d4d4"></div>
<div class="a" style="left:699px;top:547px;width:1px;height:21px;background:#d0d0d0"></div>
<div class="a" style="left:784px;top:547px;width:1px;height:21px;background:#dcdcdc"></div>
<div class="t" style="left:10px;top:552px;letter-spacing:-0.13px">Launches the Update Driver Software Wizard for the selected device.</div>
<div class="t" style="left:721px;top:554px;color:#000;letter-spacing:0.3px">wsxdn.com</div>
<div class="a" style="left:140px;top:395px;width:232px;height:130px;background:#f0f0f0;border:1px solid #8e8e8e;box-sizing:border-box;box-shadow:inset 1px 1px 0 #fafafa, inset -1px -1px 0 #fafafa"></div>
<div class="a" style="left:143px;top:398px;width:226px;height:22px;background:#d3e5f6;border:1px solid #84a9d2;box-sizing:border-box"></div>
<div class="a" style="left:170px;top:396px;width:1px;height:127px;background:rgba(140,140,140,0.22)"></div>
<div class="a" style="left:171px;top:396px;width:1px;height:127px;background:rgba(255,255,255,0.6)"></div>
<div class="a" style="left:171px;top:467px;width:198px;height:1px;background:#dadada"></div>
<div class="a" style="left:171px;top:496px;width:198px;height:1px;background:#dadada"></div>
<div class="t" style="left:175px;top:402px;letter-spacing:-0.150px;">Update Driver Software...</div>
<div class="t" style="left:175px;top:424px;letter-spacing:0.000px;">Disable</div>
<div class="t" style="left:175px;top:446px;letter-spacing:0.200px;">Uninstall</div>
<div class="t" style="left:175px;top:475px;letter-spacing:-0.142px;">Scan for hardware changes</div>
<div class="t" style="left:175px;top:504px;letter-spacing:0.000px;font-weight:bold">Properties</div>
</body></html>
